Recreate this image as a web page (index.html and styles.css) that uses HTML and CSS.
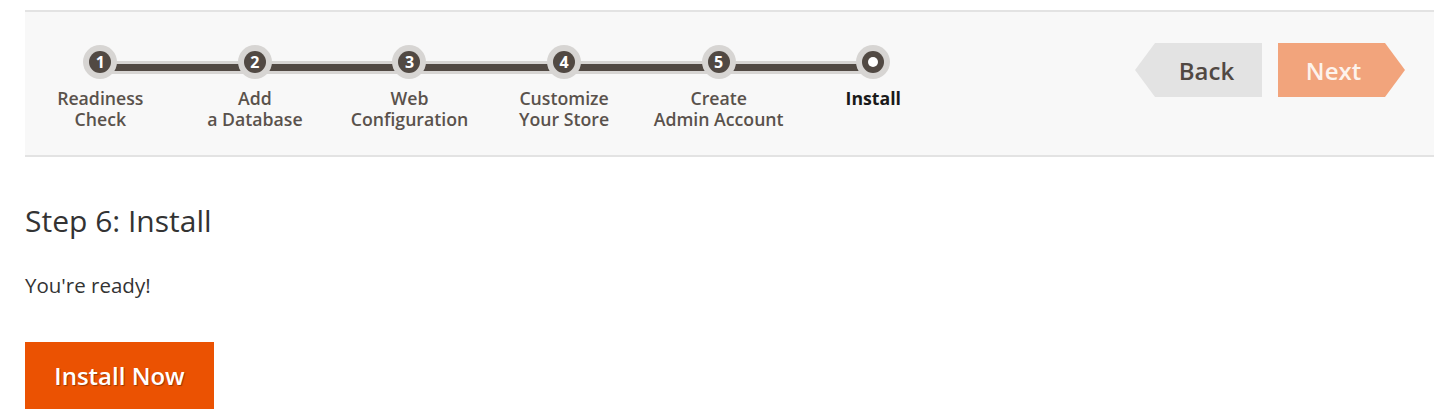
FILE: index.html
```html
<!DOCTYPE html>
<html lang="en">
<head>
  <meta charset="UTF-8">
  <title>Step 6: Install</title>
  <link rel="stylesheet" href="styles.css">
</head>
<body>

  <div class="nav-bar">
    <ul class="steps">
      <li class="step done"><span class="dot">1</span><span class="label">Readiness<br>Check</span></li>
      <li class="step done"><span class="dot">2</span><span class="label">Add<br>a Database</span></li>
      <li class="step done"><span class="dot">3</span><span class="label">Web<br>Configuration</span></li>
      <li class="step done"><span class="dot">4</span><span class="label">Customize<br>Your Store</span></li>
      <li class="step done"><span class="dot">5</span><span class="label">Create<br>Admin Account</span></li>
      <li class="step active"><span class="dot"></span><span class="label">Install</span></li>
    </ul>

    <div class="nav-buttons">
      <button class="btn-back">Back</button>
      <button class="btn-next" disabled>Next</button>
    </div>
  </div>

  <div class="content">
    <h1>Step 6: Install</h1>
    <p>You're ready!</p>
    <button class="btn-install">Install Now</button>
  </div>

</body>
</html>
```

FILE: styles.css
```css
:root {
  --brown: #514943;
  --ring: #d7d5d3;
  --panel: #f8f8f8;
  --border: #e3e3e3;
  --orange: #eb5202;
}

body {
  margin: 0;
  padding: 10px 7px 0 25px;
  font-family: 'Open Sans', sans-serif;
  color: #303030;
  background-color: #ffffff;
}

.nav-bar {
  display: flex;
  justify-content: space-between;
  background-color: var(--panel);
  border-top: 2px solid var(--border);
  border-bottom: 2px solid var(--border);
  height: 143px;
}

.steps {
  display: flex;
  list-style: none;
  margin: 0 0 0 -2px;
  padding: 39px 0 0;
}

.step {
  position: relative;
  width: 154.6px;
  display: flex;
  flex-direction: column;
  align-items: center;
}

/* connecting line between the nodes */
.step:not(:last-child)::after {
  content: '';
  position: absolute;
  top: 10px;
  left: 50%;
  width: 100%;
  height: 7px;
  background-color: var(--brown);
  border-top: 3px solid var(--ring);
  border-bottom: 3px solid var(--ring);
  z-index: 0;
}

.dot {
  position: relative;
  z-index: 1;
  width: 22px;
  height: 22px;
  border-radius: 50%;
  background-color: var(--brown);
  box-shadow: 0 0 0 6px var(--ring);
  color: #fff;
  font-size: 16px;
  font-weight: 700;
  line-height: 22px;
  text-align: center;
}

.step.active .dot::after {
  content: '';
  position: absolute;
  top: 6px;
  left: 6px;
  width: 10px;
  height: 10px;
  border-radius: 50%;
  background-color: #fff;
}

.label {
  margin-top: 15px;
  font-size: 17.7px;
  font-weight: 600;
  line-height: 21px;
  color: #5a524c;
  text-align: center;
  white-space: nowrap;
}

.step.active .label {
  color: #1a1a1a;
  font-weight: 700;
}

.nav-buttons {
  display: flex;
  gap: 16px;
  padding: 31px 29px 0 0;
}

.nav-buttons button {
  height: 54px;
  width: 127px;
  border: none;
  font-family: 'Open Sans', sans-serif;
  font-size: 24px;
  font-weight: 600;
  cursor: pointer;
}

.btn-back {
  background-color: #e3e3e3;
  color: var(--brown);
  padding-left: 22px;
  clip-path: polygon(20px 0, 100% 0, 100% 100%, 20px 100%, 0 50%);
}

.btn-next {
  background-color: #f2a47c;
  color: #fdf3ec;
  padding-right: 22px;
  clip-path: polygon(0 0, calc(100% - 20px) 0, 100% 50%, calc(100% - 20px) 100%, 0 100%);
}

.content h1 {
  margin: 46px 0 0;
  font-size: 30px;
  font-weight: 400;
  line-height: 36px;
  color: #333;
}

.content p {
  margin: 33px 0 0;
  font-size: 20.5px;
  line-height: 26px;
  color: #333;
}

.btn-install {
  margin-top: 44px;
  width: 189px;
  height: 67px;
  border: none;
  background-color: var(--orange);
  color: #fff;
  font-family: 'Open Sans', sans-serif;
  font-size: 24px;
  font-weight: 600;
  text-shadow: 1px 1px 1px rgba(0, 0, 0, 0.35);
  cursor: pointer;
}
```
